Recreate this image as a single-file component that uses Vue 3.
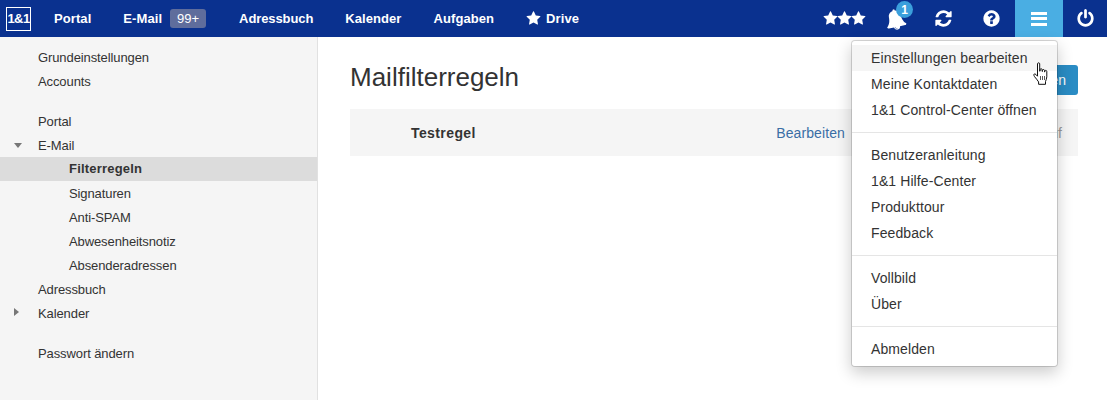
<script setup>
const navLinks = ['Kalender', 'Aufgaben']
const icons = {
  star: 'M1728 647q0 22-26 48l-363 354 86 500q1 7 1 20 0 21-10.5 35.5t-30.5 14.5q-19 0-40-12l-449-236-449 236q-22 12-40 12-21 0-31.5-14.5t-10.5-35.5q0-6 2-20l86-500-364-354q-25-27-25-48 0-37 56-46l502-73 225-455q19-41 49-41t49 41l225 455 502 73q56 9 56 46z',
  bell: 'M912 1696q0-16-16-16-59 0-101.5-42.5t-42.5-101.5q0-16-16-16t-16 16q0 73 51.5 124.5t124.5 51.5q16 0 16-16zm816-288q0 52-38 90t-90 38h-448q0 106-75 181t-181 75-181-75-75-181h-448q-52 0-90-38t-38-90q50-42 91-88t85-119.5 74.5-158.5 50-206 19.5-260q0-152 117-282.5t307-158.5q-8-19-8-39 0-40 28-68t68-28 68 28 28 68q0 20-8 39 190 28 307 158.5t117 282.5q0 139 19.5 260t50 206 74.5 158.5 85 119.5 91 88z',
  refresh: 'M1639 1056q0 5-1 7-64 268-268 434.5t-478 166.5q-146 0-282.5-55t-243.5-157l-129 129q-19 19-45 19t-45-19-19-45v-448q0-26 19-45t45-19h448q26 0 45 19t19 45-19 45l-137 137q71 66 161 102t187 36q134 0 250-65t186-179q11-17 53-117 8-23 30-23h192q13 0 22.5 9.5t9.5 22.5zm25-800v448q0 26-19 45t-45 19h-448q-26 0-45-19t-19-45 19-45l138-138q-148-137-349-137-134 0-250 65t-186 179q-11 17-53 117-8 23-30 23h-199q-13 0-22.5-9.5t-9.5-22.5v-7q65-268 270-434.5t480-166.5q146 0 284 55.5t245 156.5l130-129q19-19 45-19t45 19 19 45z',
  help: 'M1024 1376v-192q0-14-9-23t-23-9h-192q-14 0-23 9t-9 23v192q0 14 9 23t23 9h192q14 0 23-9t9-23zm256-672q0-88-55.5-163t-138.5-116-170-41q-243 0-371 213-15 24 8 42l132 100q7 6 19 6 16 0 25-12 53-68 86-92 34-24 86-24 48 0 85.5 26t37.5 59q0 38-20 61t-68 45q-63 28-115.5 86.5t-52.5 125.5v36q0 14 9 23t23 9h192q14 0 23-9t9-23q0-19 21.5-49.5t54.5-49.5q32-18 49-28.5t46-35 44.5-48 28-60.5 12.5-81zm384 192q0 209-103 385.5t-279.5 279.5-385.5 103-385.5-103-279.5-279.5-103-385.5 103-385.5 279.5-279.5 385.5-103 385.5 103 279.5 279.5 103 385.5z',
  power: 'M1664 896q0 156-61 298t-164 245-245 164-298 61-298-61-245-164-164-245-61-298q0-182 80.5-343t226.5-270q43-32 95.5-25t83.5 50q32 42 24.5 94.5t-49.5 84.5q-98 74-151.5 181t-53.5 228q0 104 40.5 198.5t109.5 163.5 163.5 109.5 198.5 40.5 198.5-40.5 163.5-109.5 109.5-163.5 40.5-198.5q0-121-53.5-228t-151.5-181q-42-32-49.5-84.5t24.5-94.5q31-43 84-50t95 25q146 109 226.5 270t80.5 343zm-640-768v640q0 52-38 90t-90 38-90-38-38-90v-640q0-52 38-90t90-38 90 38 38 90z'
}
const menuGroups = [
  ['Einstellungen bearbeiten', 'Meine Kontaktdaten', '1&1 Control-Center öffnen'],
  ['Benutzeranleitung', '1&1 Hilfe-Center', 'Produkttour', 'Feedback'],
  ['Vollbild', 'Über'],
  ['Abmelden']
]
</script>

<template>
  <div class="app">
    <header class="topbar">
      <nav class="nav-left">
        <span class="logo">1&amp;1</span>
        <a class="nav-link">Portal</a>
        <a class="nav-link">E-Mail<span class="count">99+</span></a>
        <a class="nav-link adr">Adressbuch</a>
        <a v-for="l in navLinks" :key="l" class="nav-link">{{ l }}</a>
        <a class="nav-link">
          <svg class="drive-star" viewBox="0 0 1792 1792"><path :d="icons.star" /></svg>Drive
        </a>
      </nav>
      <div class="nav-right">
        <a class="tool stars">
          <svg v-for="n in 3" :key="n" class="star" viewBox="0 0 1792 1792"><path :d="icons.star" /></svg>
        </a>
        <a class="tool bell-tool">
          <svg class="bell" viewBox="0 0 1792 1792"><path :d="icons.bell" /></svg>
          <span class="bubble">1</span>
        </a>
        <a class="tool"><svg class="glyph" viewBox="0 0 1792 1792"><path :d="icons.refresh" /></svg></a>
        <a class="tool"><svg class="glyph" viewBox="0 0 1792 1792"><path :d="icons.help" /></svg></a>
        <a class="tool active">
          <span class="bars"><i></i><i></i><i></i></span>
        </a>
        <a class="tool power"><svg class="glyph" viewBox="0 0 1792 1792"><path :d="icons.power" /></svg></a>
      </div>
    </header>

    <div class="body">
      <aside class="sidebar">
        <ul class="tree">
          <li>Grundeinstellungen</li>
          <li>Accounts</li>
        </ul>
        <ul class="tree">
          <li>Portal</li>
          <li><span class="tri down"></span>E-Mail</li>
          <li class="sub selected">Filterregeln</li>
          <li class="sub">Signaturen</li>
          <li class="sub">Anti-SPAM</li>
          <li class="sub">Abwesenheitsnotiz</li>
          <li class="sub">Absenderadressen</li>
          <li>Adressbuch</li>
          <li><span class="tri right"></span>Kalender</li>
        </ul>
        <ul class="tree">
          <li>Passwort ändern</li>
        </ul>
      </aside>

      <main class="content">
        <div class="head">
          <h1>Mailfilterregeln</h1>
          <button class="primary">Anlegen</button>
        </div>
        <div class="rule">
          <strong>Testregel</strong>
          <a class="edit">Bearbeiten</a>
          <span class="state">Auf</span>
        </div>
      </main>
    </div>

    <div class="menu">
      <template v-for="(group, i) in menuGroups" :key="i">
        <div v-if="i > 0" class="divider"></div>
        <a v-for="item in group" :key="item" class="menu-item" :class="{ hover: item === 'Einstellungen bearbeiten' }">{{ item }}</a>
      </template>
    </div>

    <svg class="cursor" viewBox="0 0 17 25">
      <path d="M4.500 1.800c0-1.300 2.200-1.300 2.200 0v7.400l.4-.1V7.600c0-1.200 2-1.200 2 0v1.800l.4 0V8.400c0-1.200 2-1.200 2 .1v1.400l.4 0v-.7c0-1.200 1.900-1.100 1.900.2v5.400c0 2-1 3.400-1.300 4.800v2.700H5.600v-2.400C4.500 17.900 2.800 16.500 1.500 14.600.4 13 .9 11.600 2 11.900c.9.300 1.700 1.400 2.500 2.300z" fill="#fff" stroke="#111" stroke-width="1" stroke-linejoin="round" />
      <path d="M7.500 14v4M9.500 14v4M11.500 14v4" stroke="#111" stroke-width=".7" fill="none" />
    </svg>
  </div>
</template>

<style>
html, body { margin: 0; background: #fff; overflow: hidden; }
</style>

<style scoped>
.app {
  height: 400px;
  display: flex;
  flex-direction: column;
  font-family: "Liberation Sans", Arial, sans-serif;
  font-size: 13px;
  color: #333;
  position: relative;
  overflow: hidden;
}
.topbar {
  height: 37px;
  flex: none;
  background: #0a318f;
  display: flex;
  justify-content: space-between;
  color: #fff;
}
.nav-left { display: flex; align-items: center; padding-left: 6px; }
.logo {
  width: 23px;
  height: 22px;
  border: 1px solid #fff;
  display: flex;
  align-items: center;
  justify-content: center;
  font-weight: 700;
  font-size: 13px;
  letter-spacing: -0.6px;
  margin-right: 7px;
}
.nav-link {
  padding: 0 16px;
  display: flex;
  align-items: center;
  font-weight: 700;
  font-size: 13px;
  color: #fff;
  letter-spacing: 0.08px;
}
.nav-link.adr { letter-spacing: -0.1px; padding-left: 17px; }
.count {
  margin-left: 8px;
  width: 36px;
  height: 19px;
  border-radius: 3px;
  background: #5f6d9c;
  display: flex;
  align-items: center;
  justify-content: center;
  letter-spacing: 0;
  font-weight: 400;
  font-size: 13px;
}
.drive-star { width: 15px; height: 15px; fill: #fff; margin-right: 5px; }
.nav-right { display: flex; }
.tool {
  width: 48px;
  height: 37px;
  display: flex;
  align-items: center;
  justify-content: center;
  position: relative;
}
.tool.power { width: 44px; }
.tool.stars { width: 53px; }
.star { width: 15px; height: 15px; fill: #fff; margin: 0 -0.5px; }
.glyph { width: 19px; height: 19px; fill: #fff; }
.bell { width: 21px; height: 21px; fill: #fff; margin-top: 2px; transform: rotate(-12deg); }
.bubble {
  position: absolute;
  left: 25px;
  top: 1px;
  width: 17px;
  height: 17px;
  border-radius: 50%;
  background: #3b9fdc;
  color: #fff;
  font-weight: 700;
  font-size: 12px;
  display: flex;
  align-items: center;
  justify-content: center;
}
.active { background: #4aaee3; }
.bars { width: 16px; display: flex; flex-direction: column; gap: 2.5px; }
.bars i { display: block; height: 3px; background: #fff; }
.body { flex: 1; display: flex; min-height: 0; }
.sidebar {
  width: 317px;
  flex: none;
  background: #f5f5f5;
  border-right: 1px solid #e1e1e1;
  padding-top: 8px;
}
.tree { list-style: none; margin: 0 0 16px; padding: 0; }
.tree li {
  height: 24px;
  line-height: 26px;
  padding-left: 38px;
  position: relative;
  letter-spacing: -0.1px;
}
.tree li.sub { padding-left: 69px; }
.tree li.selected { background: #dcdcdc; font-weight: 700; letter-spacing: .2px; line-height: 24px; }
.tri { position: absolute; width: 0; height: 0; border-style: solid; border-color: transparent; }
.tri.down { left: 14px; top: 10px; border-width: 5px 4.5px 0; border-top-color: #777; }
.tri.right { left: 14px; top: 7px; border-width: 4.5px 0 4.5px 5px; border-left-color: #777; }
.content { flex: 1; padding: 0 29px 0 32px; min-width: 0; }
.head { height: 72px; display: flex; justify-content: space-between; align-items: flex-start; }
h1 { margin: 25px 0 0; font-size: 26px; line-height: 30px; font-weight: 400; color: #333; }
.primary {
  margin-top: 28px;
  height: 30px;
  padding: 0 12px;
  border: 0;
  border-radius: 3px;
  background: #2a8cc4;
  color: #fff;
  font: 14px "Liberation Sans", Arial, sans-serif;
}
.rule {
  height: 47px;
  background: #f5f5f5;
  display: flex;
  align-items: center;
  font-size: 14px;
  padding-left: 61px;
}
.rule strong { flex: 1; font-size: 14px; letter-spacing: .4px; }
.edit { color: #3a6ea5; font-size: 14px; letter-spacing: .1px; }
.state { color: #999; margin-left: 196px; margin-right: 16px; font-size: 14px; }
.menu {
  position: absolute;
  top: 40px;
  right: 49px;
  width: 205px;
  background: #fff;
  border: 1px solid rgba(0, 0, 0, .15);
  border-radius: 4px;
  box-shadow: 0 6px 16px rgba(0, 0, 0, .2);
  padding: 4px 0;
  background-clip: padding-box;
  font-size: 14px;
}
.menu-item {
  display: block;
  height: 26px;
  line-height: 26px;
  padding-left: 19px;
  letter-spacing: .1px;
  white-space: nowrap;
}
.menu-item.hover { background: #f5f5f5; }
.divider { height: 1px; margin: 9px 0; background: #e5e5e5; }
.cursor { position: absolute; left: 1033px; top: 62px; width: 17px; height: 25px; }
</style>
